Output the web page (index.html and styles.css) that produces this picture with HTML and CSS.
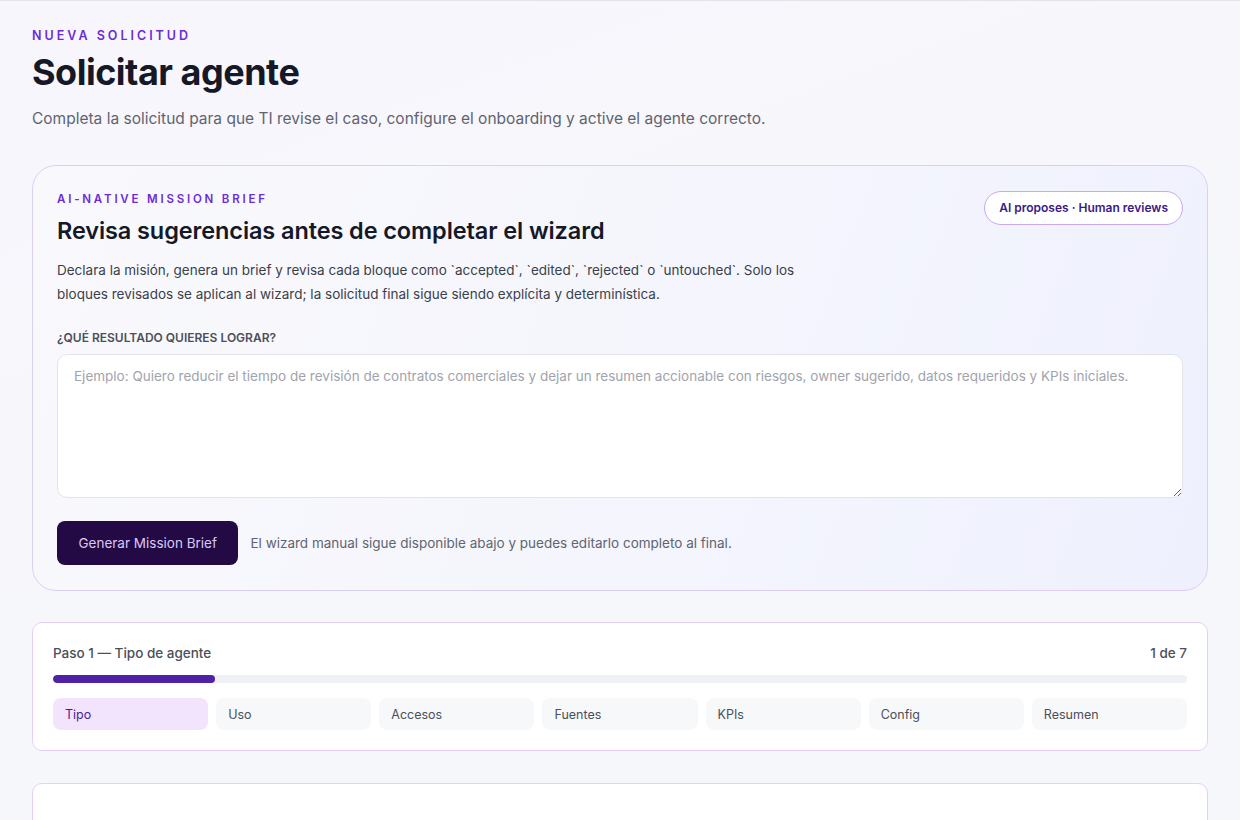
FILE: index.html
```html
<!DOCTYPE html>
<html lang="es">
<head>
<meta charset="utf-8">
<title>Solicitar agente</title>
<link rel="stylesheet" href="styles.css">
</head>
<body>
<div class="topline"></div>
<main class="page">
  <header class="head">
    <p class="eyebrow">Nueva solicitud</p>
    <h1 class="title">Solicitar agente</h1>
    <p class="lead">Completa la solicitud para que TI revise el caso, configure el onboarding y active el agente correcto.</p>
  </header>

  <section class="brief">
    <div class="brief-top">
      <div class="brief-intro">
        <p class="eyebrow small">AI-native mission brief</p>
        <h2 class="brief-title">Revisa sugerencias antes de completar el wizard</h2>
        <p class="brief-text">Declara la misión, genera un brief y revisa cada bloque como `accepted`, `edited`, `rejected` o `untouched`. Solo los bloques revisados se aplican al wizard; la solicitud final sigue siendo explícita y determinística.</p>
      </div>
      <span class="pill">AI proposes · Human reviews</span>
    </div>
    <label class="field-label" for="mission">¿Qué resultado quieres lograr?</label>
    <textarea id="mission" class="mission" placeholder="Ejemplo: Quiero reducir el tiempo de revisión de contratos comerciales y dejar un resumen accionable con riesgos, owner sugerido, datos requeridos y KPIs iniciales."></textarea>
    <div class="actions">
      <button class="btn-primary" type="button">Generar Mission Brief</button>
      <span class="hint">El wizard manual sigue disponible abajo y puedes editarlo completo al final.</span>
    </div>
  </section>

  <section class="steps">
    <div class="steps-head">
      <span>Paso 1 — Tipo de agente</span>
      <span>1 de 7</span>
    </div>
    <div class="progress"><div class="progress-fill" style="width:14.2857%"></div></div>
    <div class="tabs">
      <div class="tab active">Tipo</div>
      <div class="tab">Uso</div>
      <div class="tab">Accesos</div>
      <div class="tab">Fuentes</div>
      <div class="tab">KPIs</div>
      <div class="tab">Config</div>
      <div class="tab">Resumen</div>
    </div>
  </section>

  <section class="next-card"></section>
</main>
</body>
</html>
```

FILE: styles.css
```css
* { box-sizing: border-box; }
html, body { margin: 0; padding: 0; }
body {
  font-family: Inter, "Noto Sans", "Liberation Sans", sans-serif;
  background: linear-gradient(160deg, #f8f6fd 0%, #f7f7fb 40%, #f6f7fa 100%);
  color: #161a2c;
  height: 820px;
  overflow: hidden;
}
.topline { height: 1px; background: #e3e4ea; }
.page { padding: 27px 32px 0 32px; }
.head { margin-bottom: 37px; }
.eyebrow {
  margin: 0;
  font-size: 12.5px;
  font-weight: 600;
  letter-spacing: 3px;
  text-transform: uppercase;
  color: #6c2bd9;
}
.eyebrow.small { font-size: 11.5px; letter-spacing: 2.8px; }
.title {
  margin: 8px 0 0;
  font-size: 36px;
  font-weight: 700;
  letter-spacing: -0.5px;
  line-height: 1.2;
  color: #141827;
}
.lead {
  margin: 15px 0 0;
  font-size: 15.5px;
  color: #5f6470;
}
.brief {
  border: 1px solid #dccff6;
  border-radius: 24px;
  background: linear-gradient(110deg, #f9f9fc 0%, #f4f5fd 60%, #eef0fd 100%);
  padding: 26px 24px 25px 24px;
}
.brief-top { display: flex; justify-content: space-between; align-items: flex-start; }
.brief-intro { max-width: 770px; }
.brief-title {
  margin: 11px 0 0;
  font-size: 23.5px;
  font-weight: 600;
  letter-spacing: -0.1px;
  line-height: 28px;
  color: #141827;
}
.brief-text {
  margin: 13px 0 0;
  font-size: 13.5px;
  line-height: 24px;
  color: #3b3f4a;
}
.pill {
  margin-top: -1px;
  border: 1px solid #c6a8f5;
  background: #fff;
  border-radius: 999px;
  padding: 8px 14px 9px;
  font-size: 12px;
  font-weight: 600;
  color: #3a1a86;
  white-space: nowrap;
}
.field-label {
  display: block;
  margin-top: 24px;
  font-size: 12px;
  font-weight: 600;
  color: #4b4f5a;
  text-transform: uppercase;
}
.mission {
  display: block;
  width: 100%;
  height: 144px;
  margin-top: 9px;
  border: 1px solid #e3e3ea;
  border-radius: 10px;
  background: #fff;
  padding: 11px 16px;
  font-family: inherit;
  font-size: 13.5px;
  line-height: 20px;
  color: #1f2330;
  resize: vertical;
}
.mission::placeholder { color: #a0a4ad; }
.actions { display: flex; align-items: center; gap: 12px; margin-top: 23px; }
.btn-primary {
  height: 44px;
  padding: 0 21.5px;
  border: 0;
  border-radius: 8px;
  background: #230a44;
  color: #d9c8f7;
  font-family: inherit;
  font-size: 13.5px;
}
.hint { font-size: 13.5px; color: #5f6470; }
.steps {
  margin-top: 31px;
  border: 1px solid #e3d0fa;
  border-radius: 10px;
  background: #fff;
  padding: 22px 20px 20px;
}
.steps-head {
  display: flex;
  justify-content: space-between;
  font-size: 13.5px;
  font-weight: 500;
  color: #4b4f5a;
}
.progress {
  margin-top: 14px;
  height: 8px;
  border-radius: 999px;
  background: #f0f1f4;
  overflow: hidden;
}
.progress-fill { height: 100%; background: #4f20a8; border-radius: 999px; }
.tabs {
  margin-top: 15px;
  display: grid;
  grid-template-columns: repeat(7, 1fr);
  gap: 8px;
}
.tab {
  height: 32px;
  display: flex;
  align-items: center;
  padding: 0 12px;
  border-radius: 8px;
  background: #f7f8fa;
  font-size: 12.5px;
  color: #4b4f5a;
}
.tab.active { background: #f1e4fc; color: #4a1d96; }
.next-card {
  margin-top: 32px;
  height: 120px;
  border: 1px solid #e3d0fa;
  border-radius: 10px;
  background: #fff;
}
```
